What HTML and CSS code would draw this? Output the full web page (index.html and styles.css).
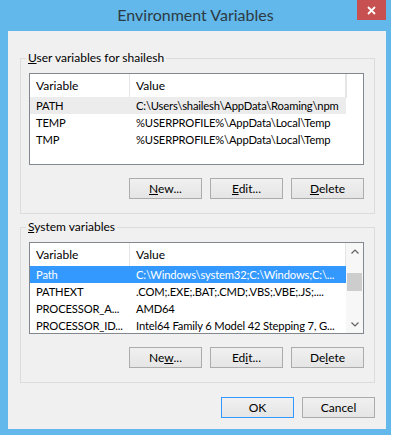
FILE: index.html
```html
<!DOCTYPE html>
<html lang="en">
<head>
    <meta charset="UTF-8">
    <meta name="viewport" content="width=device-width, initial-scale=1.0">
    <title>Environment Variables</title>
    <link rel="stylesheet" href="styles.css">
</head>
<body>
    <div class="window">
      <div class="titlebar">
        <span></span>
        <span class="title">Environment Variables</span>
        <button class="close-btn" aria-label="Close">
          <svg width="9" height="9" viewBox="0 0 9 9">
            <path d="M1 1 L8 8 M8 1 L1 8" stroke="#fff" stroke-width="1.8" fill="none"/>
          </svg>
        </button>
      </div>

      <div class="client">
        <fieldset class="group">
          <legend><u>U</u>ser variables for shailesh</legend>
          <div class="list">
            <div class="list-body">
              <div class="row head">
                <span class="col-var">Variable</span>
                <span class="col-val">Value</span>
              </div>
              <div class="row hover">
                <span class="col-var">PATH</span>
                <span class="col-val">C:\Users\shailesh\AppData\Roaming\npm</span>
              </div>
              <div class="row">
                <span class="col-var">TEMP</span>
                <span class="col-val">%USERPROFILE%\AppData\Local\Temp</span>
              </div>
              <div class="row">
                <span class="col-var">TMP</span>
                <span class="col-val">%USERPROFILE%\AppData\Local\Temp</span>
              </div>
            </div>
            <div class="scroll-space"></div>
          </div>
          <div class="actions">
            <button class="btn"><u>N</u>ew...</button>
            <button class="btn"><u>E</u>dit...</button>
            <button class="btn"><u>D</u>elete</button>
          </div>
        </fieldset>

        <fieldset class="group second">
          <legend><u>S</u>ystem variables</legend>
          <div class="list">
            <div class="list-body">
              <div class="row head">
                <span class="col-var">Variable</span>
                <span class="col-val">Value</span>
              </div>
              <div class="row selected">
                <span class="col-var">Path</span>
                <span class="col-val">C:\Windows\system32;C:\Windows;C:\...</span>
              </div>
              <div class="row">
                <span class="col-var">PATHEXT</span>
                <span class="col-val">.COM;.EXE;.BAT;.CMD;.VBS;.VBE;.JS;....</span>
              </div>
              <div class="row">
                <span class="col-var">PROCESSOR_A...</span>
                <span class="col-val">AMD64</span>
              </div>
              <div class="row">
                <span class="col-var">PROCESSOR_ID...</span>
                <span class="col-val">Intel64 Family 6 Model 42 Stepping 7, G...</span>
              </div>
            </div>
            <div class="scrollbar">
              <div class="arrow">
                <svg width="8" height="5" viewBox="0 0 8 5"><path d="M0.5 4.5 L4 1 L7.5 4.5" stroke="#606060" stroke-width="1.2" fill="none"/></svg>
              </div>
              <div class="track">
                <div class="thumb"></div>
              </div>
              <div class="arrow">
                <svg width="8" height="5" viewBox="0 0 8 5"><path d="M0.5 0.5 L4 4 L7.5 0.5" stroke="#606060" stroke-width="1.2" fill="none"/></svg>
              </div>
            </div>
          </div>
          <div class="actions">
            <button class="btn">Ne<u>w</u>...</button>
            <button class="btn">Ed<u>i</u>t...</button>
            <button class="btn">De<u>l</u>ete</button>
          </div>
        </fieldset>

        <div class="actions dialog-actions">
          <button class="btn default">OK</button>
          <button class="btn">Cancel</button>
        </div>
      </div>
    </div>
</body>
</html>
```

FILE: styles.css
```css
body {
  margin: 0;
  background: #fff;
  font-family: Lato, 'Noto Sans', sans-serif;
  font-size: 12px;
  color: #000;
}

.window {
  width: 391px;
  height: 435px;
  background: #62b8ea;
  display: flex;
  flex-direction: column;
  box-sizing: border-box;
}

.titlebar {
  height: 31px;
  display: grid;
  grid-template-columns: 1fr auto 1fr;
}

.title {
  font-size: 16px;
  line-height: 30px;
  color: #2c3a44;
  text-align: center;
}

.close-btn {
  justify-self: end;
  align-self: start;
  width: 29px;
  height: 20px;
  margin-right: 5px;
  padding: 0;
  border: none;
  background: #c75050;
  display: flex;
  align-items: center;
  justify-content: center;
}

.client {
  flex: 1;
  margin: 0 5px 6px 8px;
  padding: 19px 11px 0 12px;
  background: #f0f0f0;
}

.group {
  margin: 0;
  padding: 7px 10px 14px 8px;
  border: 1px solid #dcdcdc;
}

.group.second {
  margin-top: 5px;
}

.group legend {
  padding: 0 2px;
  margin-left: -3px;
  line-height: 16px;
  color: #000;
}

.list {
  height: 92px;
  box-sizing: border-box;
  border: 1px solid #828790;
  background: #fff;
  display: flex;
  overflow: hidden;
}

.list-body {
  width: 316px;
}

.scroll-space {
  flex: 1;
  border-left: 1px solid #e5e5e5;
  height: 24px;
}

.row {
  display: flex;
  height: 17px;
  line-height: 17px;
  white-space: nowrap;
}

.row.head {
  height: 23px;
  line-height: 23px;
}

.row.head span {
  border-right: 1px solid #e5e5e5;
}

.row.hover {
  background: #ececec;
}

.row.selected {
  background: #3399ff;
  color: #fff;
}

.col-var {
  width: 100px;
  box-sizing: border-box;
  padding-left: 6px;
  overflow: hidden;
}

.col-val {
  flex: 1;
  padding-left: 6px;
  overflow: hidden;
}

.row:not(.head) span {
  font-size: 11.2px;
  letter-spacing: -0.15px;
}

.scrollbar {
  flex: 1;
  display: flex;
  flex-direction: column;
  background: #f7f7f7;
}

.arrow {
  height: 17px;
  display: flex;
  align-items: center;
  justify-content: center;
}

.track {
  flex: 1;
  padding-top: 13px;
}

.thumb {
  height: 18px;
  margin: 0 1px;
  background: #cdcdcd;
}

.actions {
  display: flex;
  justify-content: flex-end;
  gap: 8px;
  margin-top: 13px;
}

.btn {
  width: 73px;
  height: 21px;
  padding: 0;
  border: 1px solid #acacac;
  background: linear-gradient(#f0f0f0, #e5e5e5);
  font-family: inherit;
  font-size: 12px;
  color: #000;
}

.btn.default {
  border-color: #3399ff;
}

.dialog-actions {
  margin-top: 14px;
}
```
